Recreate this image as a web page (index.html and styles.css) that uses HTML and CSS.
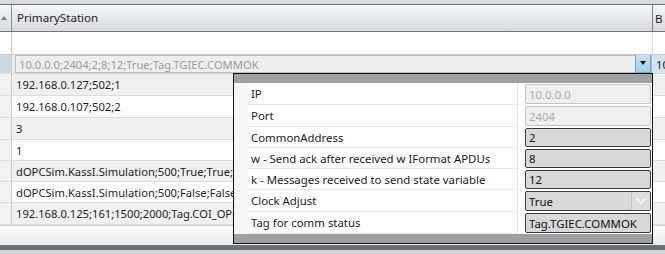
FILE: index.html
```html
<!DOCTYPE html>
<html>
<head>
<meta charset="utf-8">
<link rel="stylesheet" href="styles.css">
</head>
<body>
<div class="app">
  <div class="topstrip"></div>
  <div class="grid">
    <div class="row hdr">
      <div class="rh"><span class="sort"></span></div>
      <div class="c1">PrimaryStation</div>
      <div class="c2">B</div>
    </div>
    <div class="row r1 white">
      <div class="rh"></div>
      <div class="c1"></div>
      <div class="c2"></div>
    </div>
    <div class="row r2 edit">
      <div class="rh sel"></div>
      <div class="c1">
        <div class="combo">
          <span class="combo-text">10.0.0.0;2404;2;8;12;True;Tag.TGIEC.COMMOK</span>
          <span class="combo-btn"><span class="tri"></span></span>
        </div>
      </div>
      <div class="c2 selcell">10.0.0.0;2404;2;8;12</div>
    </div>
    <div class="row h22 grey"><div class="rh"></div><div class="c1">192.168.0.127;502;1</div><div class="c2"></div></div>
    <div class="row h22 white"><div class="rh"></div><div class="c1">192.168.0.107;502;2</div><div class="c2"></div></div>
    <div class="row h22 grey"><div class="rh"></div><div class="c1">3</div><div class="c2"></div></div>
    <div class="row h21 white"><div class="rh"></div><div class="c1">1</div><div class="c2"></div></div>
    <div class="row h21 grey"><div class="rh"></div><div class="c1">dOPCSim.KassI.Simulation;500;True;True;2000;Tag.x</div><div class="c2"></div></div>
    <div class="row h21 white"><div class="rh"></div><div class="c1">dOPCSim.KassI.Simulation;500;False;False;2000</div><div class="c2"></div></div>
    <div class="row h22 grey"><div class="rh"></div><div class="c1">192.168.0.125;161;1500;2000;Tag.COI_OPC_STATUS</div><div class="c2"></div></div>
    <div class="footer"></div>
  </div>
  <div class="bottomband"></div>
  <div class="bottomstrip"></div>

  <div class="popup">
    <div class="pbar"></div>
    <div class="prows">
      <div class="prow h22"><div class="pm"></div><div class="pl">IP</div><div class="pv"><div class="box dis">10.0.0.0</div></div></div>
      <div class="prow h22"><div class="pm"></div><div class="pl">Port</div><div class="pv"><div class="box dis">2404</div></div></div>
      <div class="prow h21"><div class="pm"></div><div class="pl">CommonAddress</div><div class="pv"><div class="box">2</div></div></div>
      <div class="prow h21"><div class="pm"></div><div class="pl">w - Send ack after received w IFormat APDUs</div><div class="pv"><div class="box">8</div></div></div>
      <div class="prow h21"><div class="pm"></div><div class="pl">k - Messages received to send state variable</div><div class="pv"><div class="box">12</div></div></div>
      <div class="prow h22"><div class="pm"></div><div class="pl">Clock Adjust</div><div class="pv"><div class="box cbox"><span class="cb-text">True</span><span class="cb-btn"><svg width="12" height="8" viewBox="0 0 12 8"><path d="M1.5 1.5 L6 6 L10.5 1.5" fill="none" stroke="#fafafa" stroke-width="1.6"/></svg></span></div></div></div>
      <div class="prow h22"><div class="pm"></div><div class="pl">Tag for comm status</div><div class="pv"><div class="box">Tag.TGIEC.COMMOK</div></div></div>
    </div>
    <div class="pbar bot"></div>
  </div>
</div>
</body>
</html>
```
FILE: styles.css
```css
html, body {
  margin: 0;
  padding: 0;
  overflow: hidden;
  background: #ffffff;
}
.app {
  position: relative;
  width: 665px;
  height: 254px;
  overflow: hidden;
  font-family: "Segoe UI", "Noto Sans", "Open Sans", sans-serif;
  font-size: 11.2px;
  color: #1e1e1e;
}
.topstrip {
  height: 4px;
  background: #d9dadd;
  border-bottom: 1px solid #6e6e70;
}
.grid {
  display: flex;
  flex-direction: column;
}
.row {
  display: flex;
  box-sizing: border-box;
  border-bottom: 1px solid #dcdcdc;
  white-space: nowrap;
}
.rh {
  width: 12px;
  flex: none;
  box-sizing: border-box;
  border-right: 1px solid #c9c9c9;
  background: #f2f2f2;
}
.c1 {
  width: 641px;
  flex: none;
  box-sizing: border-box;
  border-right: 1px solid #dedede;
  padding-left: 4px;
  display: flex;
  align-items: center;
  overflow: hidden;
}
.c2 {
  flex: 1;
  padding-left: 3px;
  display: flex;
  align-items: center;
  overflow: hidden;
}
.hdr {
  height: 27px;
  background: linear-gradient(#f6f7f8, #e4e5e8 60%, #d9dadd);
  border-bottom: 1px solid #727476;
  font-size: 11.6px;
}
.hdr .rh {
  background: transparent;
  border-right: 1px solid #8c8c8c;
  display: flex;
  align-items: center;
  justify-content: center;
  padding-right: 3px;
}
.sort {
  width: 0;
  height: 0;
  border-left: 3px solid transparent;
  border-right: 3px solid transparent;
  border-bottom: 4px solid #7e7e7e;
  margin-top: -1px;
}
.hdr .c1 {
  border-right: 1px solid #7e7e7e;
  padding-left: 5px;
  padding-bottom: 1px;
}
.hdr .c2 {
  padding-left: 2px;
}
.r1 {
  height: 23px;
  border-bottom: 1px solid #c9c9c9;
}
.r1 .rh {
  background: #ffffff;
}
.r2 {
  height: 19px;
  background: #ededed;
}
.r2 .c1 {
  padding-left: 3px;
  align-items: flex-start;
}
.rh.sel {
  background: #cdd8e3;
}
.selcell {
  background: #d2e2ef;
  color: #1e1e1e;
}
.combo {
  box-sizing: border-box;
  width: 637px;
  height: 18px;
  border: 1px solid #bcbcbc;
  background: #efefef;
  display: flex;
  align-items: center;
}
.combo-text {
  flex: 1;
  padding-left: 3px;
  color: #9a9a9a;
}
.combo-btn {
  width: 16px;
  height: 19px;
  margin-top: -2px;
  box-sizing: border-box;
  background: linear-gradient(#c4e2f5, #a3cfec);
  border: 1px solid #6fa6cf;
  display: flex;
  align-items: center;
  justify-content: center;
}
.tri {
  width: 0;
  height: 0;
  border-left: 3px solid transparent;
  border-right: 3px solid transparent;
  border-top: 4px solid #111;
}
.h22 { height: 22px; }
.h21 { height: 21px; }
.grey { background: #f0f0f0; }
.white { background: #ffffff; }
.footer {
  height: 20px;
  background: linear-gradient(#fbfbfb, #e9eaec);
  border-top: 1px solid #cfcfcf;
  box-sizing: border-box;
}
.bottomband {
  height: 5px;
  background: #6f7072;
}
.bottomstrip {
  height: 5px;
  background: #d6d7da;
}

/* popup editor */
.popup {
  position: absolute;
  left: 233px;
  top: 73px;
  width: 420px;
  height: 171px;
  box-sizing: border-box;
  border: 1px solid #111;
  background: #f6f6f6;
  display: flex;
  flex-direction: column;
  font-size: 11.4px;
}
.pbar {
  height: 9px;
  flex: none;
  background: #a0a0a0;
}
.pbar.bot {
  flex: 1;
}
.prows {
  display: flex;
  flex-direction: column;
}
.prow {
  display: flex;
  box-sizing: border-box;
  white-space: nowrap;
}
.pm {
  width: 14px;
  flex: none;
  background: #f6f6f6;
}
.pl {
  width: 270px;
  flex: none;
  box-sizing: border-box;
  background: #ffffff;
  border-bottom: 1px solid #e6e6e6;
  border-right: 1px solid #e6e6e6;
  padding-left: 3px;
  display: flex;
  align-items: center;
  color: #1a1a1a;
}
.pv {
  flex: 1;
  background: #ffffff;
  padding: 1px 1px 0 7px;
  box-sizing: border-box;
  display: flex;
}
.box {
  flex: 1;
  box-sizing: border-box;
  height: calc(100% - 1px);
  border: 1px solid #3a3a3a;
  border-radius: 2px;
  background: #d8d8d8;
  padding-left: 3px;
  display: flex;
  align-items: center;
  color: #111;
}
.box.dis {
  border-color: #c4c4c4;
  background: #f0f0f0;
  color: #acacac;
}
.cbox {
  padding-right: 0;
}
.cb-text {
  flex: 1;
}
.cb-btn {
  width: 19px;
  height: 100%;
  box-sizing: border-box;
  background: #dedede;
  border-left: 1px solid #c8c8c8;
  display: flex;
  align-items: center;
  justify-content: center;
}
```
